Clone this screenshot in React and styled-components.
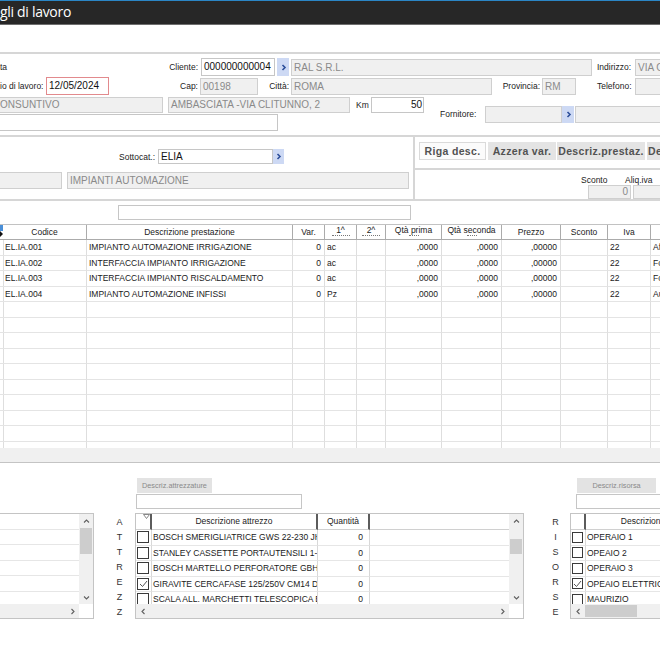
import React from 'react';
import styled, { createGlobalStyle } from 'styled-components';

const GlobalStyle = createGlobalStyle`
  html, body { margin: 0; padding: 0; background: #fff; }
  body { font-family: "Liberation Sans", Arial, sans-serif; color: #1e1e1e; }
  * { box-sizing: border-box; }
`;

const Window = styled.div`
  width: 660px;
  height: 660px;
  overflow: hidden;
  background: #fff;
  display: flex;
  flex-direction: column;
`;

const TitleBar = styled.div`
  flex: 0 0 25px;
  background: #272727;
  border-top: 1px solid #2b86c5;
  border-bottom: 1px solid #6e6e6e;
  color: #fff;
  font-family: "Open Sans", "Noto Sans", sans-serif;
  font-size: 14px;
  line-height: 21px;
  letter-spacing: -0.3px;
  white-space: nowrap;
`;

const Gap = styled.div`
  flex: 0 0 ${p => p.$h}px;
`;

const Section = styled.div`
  flex: 0 0 auto;
  border-top: 2px solid #d6d6d6;
  padding-top: ${p => p.$pt || 0}px;
  padding-bottom: ${p => p.$pb || 0}px;
`;

const Row = styled.div`
  display: flex;
  align-items: center;
  flex-shrink: 0;
  height: ${p => p.$h}px;
  margin-top: ${p => p.$mt || 0}px;
`;

const Block = styled.div`
  display: flex;
  align-items: center;
  margin-top: ${p => p.$mt || 0}px;
`;

const Stack = styled.div`
  flex: 0 0 ${p => p.$w}px;
  display: flex;
  flex-direction: column;
`;

const Label = styled.div`
  flex: 0 0 ${p => p.$w}px;
  margin-left: ${p => p.$ml || 0}px;
  font-size: 8.5px;
  color: #222;
  text-align: ${p => (p.$right ? 'right' : 'left')};
  white-space: nowrap;
`;

const Box = styled.div`
  flex: 0 0 ${p => p.$w}px;
  height: ${p => p.$h || 17}px;
  margin-left: ${p => p.$ml || 0}px;
  border: 1px solid ${p => (p.$v === 'err' ? '#e28a8d' : p.$v === 'off' ? '#cfcfcf' : '#c6c6c6')};
  ${p => p.$noLeft && 'border-left: none;'}
  background: ${p => (p.$v === 'off' ? '#f0f0f0' : '#fff')};
  color: ${p => (p.$v === 'off' ? '#8a8a8a' : '#111')};
  font-size: 10px;
  line-height: ${p => (p.$h || 17) - 2}px;
  padding: 0 ${p => (p.$pad === undefined ? 2 : p.$pad)}px;
  text-align: ${p => (p.$right ? 'right' : 'left')};
  white-space: nowrap;
  overflow: hidden;
`;

const ArrowBtn = styled.div`
  flex: 0 0 ${p => p.$w || 12}px;
  height: ${p => p.$h || 17}px;
  margin-left: ${p => p.$ml || 0}px;
  background: #cdd9f4;
  display: flex;
  align-items: center;
  justify-content: center;
`;

const Chevron = ({ dir = 'right', color = '#606060', w = 1.1 }) => {
  const d = {
    right: 'M2.5 1 L5 3.5 L2.5 6',
    left: 'M4.5 1 L2 3.5 L4.5 6',
    up: 'M1 4.5 L3.5 2 L6 4.5',
    down: 'M1 2.5 L3.5 5 L6 2.5',
  }[dir];
  return (
    <svg width="7" height="7" viewBox="0 0 7 7">
      <path d={d} fill="none" stroke={color} strokeWidth={w} />
    </svg>
  );
};

const Arrow = props => (
  <ArrowBtn {...props}>
    <Chevron dir="right" color="#2d4f9a" w={1.6} />
  </ArrowBtn>
);

/* section 2 */
const Split = styled.div`
  flex: 0 0 62px;
  border-top: 2px solid #d6d6d6;
  display: flex;
`;

const LeftPane = styled.div`
  flex: 0 0 413px;
  display: flex;
  flex-direction: column;
`;

const RightPane = styled.div`
  flex: 1;
  border-left: 2px solid #d6d6d6;
  display: flex;
  flex-direction: column;
  overflow: hidden;
`;

const BtnBar = styled.div`
  flex: 0 0 33px;
  border-bottom: 2px solid #d6d6d6;
  display: flex;
  align-items: flex-start;
  padding: 5px 0 0 4px;
  white-space: nowrap;
`;

const ActBtn = styled.div`
  flex: 0 0 ${p => p.$w}px;
  height: 18px;
  margin-left: ${p => p.$ml || 0}px;
  background: ${p => (p.$light ? '#fbfbfb' : '#e4e4e4')};
  border: 1px solid ${p => (p.$light ? '#dadada' : '#e4e4e4')};
  color: #525252;
  font-weight: bold;
  font-size: 10.5px;
  letter-spacing: 0.35px;
  line-height: 16px;
  text-align: center;
  white-space: nowrap;
  overflow: hidden;
`;

/* main grid */
const mainCols = [3, 84, 206, 32, 32, 29, 56, 60, 59, 47, 43, 60];

const Table = styled.div`
  flex: 0 0 224px;
  margin-top: 4px;
  border-top: 1px solid #c2c2c2;
  display: grid;
  grid-template-columns: ${mainCols.map(c => c + 'px').join(' ')};
  grid-template-rows: 15px;
  grid-auto-rows: 15.5px;
  align-content: start;
  overflow: hidden;
`;

const HeadCell = styled.div`
  border-right: 1px solid #ababab;
  border-bottom: 1px solid #ababab;
  font-size: 8.5px;
  color: #222;
  text-align: center;
  line-height: 14px;
  white-space: nowrap;
  overflow: hidden;
`;

const HeadTwo = styled.div`
  line-height: 8px;
  padding-top: 1px;
  display: flex;
  flex-direction: column;
  align-items: center;
`;

const UnitDots = styled.span`
  width: ${p => p.$w}px;
  margin-top: 1px;
  border-top: 1px dotted #777;
`;

const Corner = styled(HeadCell)`
  border-right: none;
  display: flex;
  flex-direction: column;
`;

const CornerBlue = styled.div`
  height: 6px;
  background: #4a8fd8;
`;

const CornerMark = styled.div`
  width: 0;
  height: 0;
  border-top: 3px solid transparent;
  border-bottom: 3px solid transparent;
  border-left: 3px solid #111;
`;

const Cell = styled.div`
  border-right: 1px solid #dedede;
  border-bottom: 1px solid #e4e4e4;
  font-size: 8.5px;
  color: #1a1a1a;
  line-height: 14.5px;
  padding: 0 ${p => (p.$right ? 3 : 1)}px 0 ${p => (p.$right ? 0 : 2)}px;
  text-align: ${p => (p.$right ? 'right' : 'left')};
  white-space: nowrap;
  overflow: hidden;
`;

const Band = styled.div`
  flex: 0 0 15px;
  background: #f0f0f0;
  border-bottom: 1px solid #c4c4c4;
`;

/* bottom part */
const Bottom = styled.div`
  flex: 1;
  display: flex;
  align-items: flex-start;
  padding-top: 15px;
`;

const Panel = styled.div`
  flex: 0 0 ${p => p.$w}px;
  margin-left: ${p => p.$ml || 0}px;
  margin-top: ${p => p.$mt || 0}px;
  display: flex;
  flex-direction: column;
  align-items: flex-start;
`;

const SmallBtn = styled.div`
  width: ${p => p.$w}px;
  height: 15px;
  margin-left: ${p => p.$ml || 0}px;
  background: #e3e3e3;
  color: #8a8a8a;
  font-size: 7.3px;
  line-height: 15px;
  text-align: center;
  white-space: nowrap;
`;

const SmallInput = styled.div`
  width: ${p => p.$w}px;
  height: 15px;
  margin-top: 1px;
  margin-left: ${p => p.$ml || 0}px;
  border: 1px solid #c6c6c6;
  background: #fff;
`;

const Letters = styled.div`
  flex: 0 0 9px;
  margin-left: ${p => p.$ml}px;
  margin-top: 37px;
  display: flex;
  flex-direction: column;
  align-items: center;
  font-size: 9px;
  line-height: 15px;
  color: #333;
`;

const Frame = styled.div`
  width: ${p => p.$w}px;
  height: 106px;
  margin-top: ${p => p.$mt || 0}px;
  border: 1px solid #c4c4c4;
  ${p => p.$noLeft && 'border-left: none;'}
  display: grid;
  grid-template-columns: 1fr 14px;
  grid-template-rows: 1fr 14px;
  background: #fff;
  overflow: hidden;
`;

const ListRows = styled.div`
  display: flex;
  flex-direction: column;
  overflow: hidden;
`;

const ListRow = styled.div`
  flex: 0 0 15.5px;
  border-bottom: 1px solid #e6e6e6;
`;

const ScrollV = styled.div`
  background: #f0f0f0;
  display: flex;
  flex-direction: column;
`;

const ScrollH = styled.div`
  background: #f0f0f0;
  display: flex;
  align-items: stretch;
`;

const ScrollBtn = styled.div`
  flex: 0 0 14px;
  display: flex;
  align-items: center;
  justify-content: center;
`;

const ThumbV = styled.div`
  flex: 0 0 ${p => p.$len}px;
  margin: ${p => p.$at}px 1px 0;
  background: #cdcdcd;
`;

const ThumbH = styled.div`
  flex: 0 0 ${p => p.$len}px;
  margin: 1px 0 1px ${p => p.$at}px;
  background: #cdcdcd;
`;

const Fill = styled.div`
  flex: 1;
`;

const Blank = styled.div`
  background: #fff;
`;

const SubGrid = styled.div`
  display: grid;
  grid-template-columns: ${p => p.$cols};
  grid-template-rows: 16px;
  grid-auto-rows: 15.5px;
  align-content: start;
  overflow: hidden;
`;

const SubHead = styled.div`
  border-right: ${p => (p.$bar ? '2px solid #5c5c5c' : 'none')};
  border-bottom: 1px solid #d0d0d0;
  font-size: 8.5px;
  color: #222;
  line-height: 15px;
  text-align: center;
  white-space: nowrap;
  overflow: hidden;
  display: flex;
  justify-content: ${p => (p.$filter ? 'flex-end' : 'center')};
  align-items: flex-start;
`;

const SubCell = styled.div`
  border-right: ${p => (p.$line ? '1px solid #d8d8d8' : 'none')};
  border-bottom: 1px solid #e6e6e6;
  font-size: 8.5px;
  color: #1a1a1a;
  line-height: 14.5px;
  padding: 0 ${p => (p.$right ? 6 : 1)}px 0 ${p => (p.$right ? 0 : 1)}px;
  text-align: ${p => (p.$right ? 'right' : 'left')};
  white-space: nowrap;
  overflow: hidden;
  display: ${p => (p.$center ? 'flex' : 'block')};
  align-items: center;
`;

const CheckBox = styled.span`
  width: ${p => p.$s}px;
  height: ${p => p.$s}px;
  border: 1px solid #3a3a3a;
  background: #fff;
  display: flex;
  align-items: center;
  justify-content: center;
`;

const Check = ({ on, s = 12 }) => (
  <CheckBox $s={s}>
    {on && (
      <svg width="9" height="8" viewBox="0 0 9 8">
        <path d="M1 4 L3.5 6.5 L8 1" fill="none" stroke="#555" strokeWidth="1" />
      </svg>
    )}
  </CheckBox>
);

const Filter = () => (
  <svg width="7" height="5" viewBox="0 0 7 5">
    <path d="M0.5 0.5 L6.5 0.5 L3.5 4.5 Z" fill="#fff" stroke="#6a6a6a" strokeWidth="0.8" />
  </svg>
);

const rows = [
  ['EL.IA.001', 'IMPIANTO AUTOMAZIONE IRRIGAZIONE', 'ac', 'Affidamento'],
  ['EL.IA.002', 'INTERFACCIA IMPIANTO IRRIGAZIONE', 'ac', 'Fornitura'],
  ['EL.IA.003', 'INTERFACCIA IMPIANTO RISCALDAMENTO', 'ac', 'Fornitura'],
  ['EL.IA.004', 'IMPIANTO AUTOMAZIONE INFISSI', 'Pz', 'Automazione'],
];

const attrezzi = [
  ['BOSCH SMERIGLIATRICE GWS 22-230 JH', false],
  ['STANLEY CASSETTE PORTAUTENSILI 1-93-981', false],
  ['BOSCH MARTELLO PERFORATORE GBH 2-26', false],
  ['GIRAVITE CERCAFASE 125/250V CM14 DIN', true],
  ['SCALA ALL. MARCHETTI TELESCOPICA EUROPA', false],
];

const risorse = [
  ['OPERAIO 1', false],
  ['OPEAIO 2', false],
  ['OPERAIO 3', false],
  ['OPEAIO ELETTRICO', true],
  ['MAURIZIO', false],
];

const MainGrid = () => {
  const body = [];
  for (let i = 0; i < 14; i++) {
    const r = rows[i];
    const vals = r
      ? [r[0], r[1], '0', r[2], '', ',0000', ',0000', ',00000', '', '22', r[3]]
      : ['', '', '', '', '', '', '', '', '', '', ''];
    const right = [false, false, true, false, false, true, true, true, true, false, false];
    body.push(<Cell key={'i' + i} />);
    vals.forEach((v, j) => (
      body.push(<Cell key={i + '-' + j} $right={right[j]}>{v}</Cell>)
    ));
  }
  const two = (a, w) => (
    <HeadTwo>
      {a}
      <UnitDots $w={w} />
    </HeadTwo>
  );
  return (
    <Table>
      <Corner>
        <CornerBlue />
        <CornerMark />
      </Corner>
      <HeadCell>Codice</HeadCell>
      <HeadCell>Descrizione prestazione</HeadCell>
      <HeadCell>Var.</HeadCell>
      <HeadCell>{two('1^', 18)}</HeadCell>
      <HeadCell>{two('2^', 18)}</HeadCell>
      <HeadCell>{two('Qtà prima', 10)}</HeadCell>
      <HeadCell>{two('Qtà seconda', 10)}</HeadCell>
      <HeadCell>Prezzo</HeadCell>
      <HeadCell>Sconto</HeadCell>
      <HeadCell>Iva</HeadCell>
      <HeadCell />
      {body}
    </Table>
  );
};

const VBar = ({ at, len }) => (
  <ScrollV>
    <ScrollBtn><Chevron dir="up" /></ScrollBtn>
    <ThumbV $at={at} $len={len} />
    <Fill />
    <ScrollBtn><Chevron dir="down" /></ScrollBtn>
  </ScrollV>
);

const App = () => (
  <Window>
    <GlobalStyle />
    <TitleBar>gli di lavoro</TitleBar>
    <Gap $h={27} />

    <Section $pt={4} $pb={4}>
      <Row $h={18}>
        <Label $w={166}>ta</Label>
        <Label $w={32} $right>Cliente:</Label>
        <Box $w={74} $h={18} $ml={3}>000000000004</Box>
        <Arrow $ml={2} $h={18} />
        <Box $w={301} $h={17} $ml={2} $v="off">RAL S.R.L.</Box>
        <Label $w={35} $ml={5}>Indirizzo:</Label>
        <Box $w={90} $ml={3} $v="off">VIA CLITUNNO, 2</Box>
      </Row>
      <Row $h={18} $mt={1}>
        <Label $w={46}>io di lavoro:</Label>
        <Box $w={63} $h={18} $v="err">12/05/2024</Box>
        <Label $w={89} $right>Cap:</Label>
        <Box $w={58} $ml={2} $v="off">00198</Box>
        <Label $w={31} $right>Città:</Label>
        <Box $w={201} $ml={2} $v="off">ROMA</Box>
        <Label $w={48} $right>Provincia:</Label>
        <Box $w={34} $ml={2} $v="off">RM</Box>
        <Label $w={35} $ml={21}>Telefono:</Label>
        <Box $w={90} $ml={3} $v="off" />
      </Row>
      <Block $mt={2}>
        <Stack $w={424}>
          <Row $h={16}>
            <Box $w={163} $h={16} $v="off" $noLeft $pad={0}>ONSUNTIVO</Box>
            <Box $w={182} $h={16} $ml={5} $v="off">AMBASCIATA -VIA CLITUNNO, 2</Box>
            <Label $w={15} $ml={6}>Km</Label>
            <Box $w={53} $h={16} $right $pad={1}>50</Box>
          </Row>
          <Row $h={17} $mt={1}>
            <Box $w={278} $h={17} $noLeft />
          </Row>
        </Stack>
        <Label $w={45} $ml={16}>Fornitore:</Label>
        <Box $w={77} $v="off" />
        <Arrow />
        <Box $w={100} $ml={1} $v="off" />
      </Block>
    </Section>

    <Split>
      <LeftPane>
        <Row $h={15} $mt={12}>
          <Label $w={155} $right>Sottocat.:</Label>
          <Box $w={115} $h={15} $ml={3}>ELIA</Box>
          <Arrow $w={11} $h={15} />
        </Row>
        <Row $h={17} $mt={8}>
          <Box $w={62} $v="off" $noLeft />
          <Box $w={342} $ml={5} $v="off">IMPIANTI AUTOMAZIONE</Box>
        </Row>
      </LeftPane>
      <RightPane>
        <BtnBar>
          <ActBtn $w={67} $light>Riga desc.</ActBtn>
          <ActBtn $w={68} $ml={2}>Azzera var.</ActBtn>
          <ActBtn $w={88} $ml={1}>Descriz.prestaz.</ActBtn>
          <ActBtn $w={80} $ml={2}>Descriz.gruppo</ActBtn>
        </BtnBar>
        <Row $h={10} $mt={5}>
          <Label $w={28} $ml={166}>Sconto</Label>
          <Label $w={40} $ml={16}>Aliq.iva</Label>
        </Row>
        <Row $h={14}>
          <Box $w={43} $h={14} $ml={173} $v="off" $right>0</Box>
          <Box $w={60} $h={14} $ml={2} $v="off" />
        </Row>
      </RightPane>
    </Split>

    <Section>
      <Row $h={15} $mt={4}>
        <Box $w={293} $h={15} $ml={118} />
      </Row>
    </Section>

    <MainGrid />
    <Band />

    <Bottom>
      <Panel $w={94} $mt={35}>
        <Frame $w={94} $noLeft>
          <ListRows>
            {[0, 1, 2, 3, 4, 5].map(i => <ListRow key={i} />)}
          </ListRows>
          <VBar at={0} len={26} />
          <ScrollH>
            <Fill />
            <ScrollBtn><Chevron dir="right" /></ScrollBtn>
          </ScrollH>
          <Blank />
        </Frame>
      </Panel>

      <Letters $ml={21}>
        {'ATTREZZ'.split('').map((c, i) => <span key={i}>{c}</span>)}
      </Letters>

      <Panel $w={389} $ml={11}>
        <SmallBtn $w={75} $ml={2}>Descriz.attrezzature</SmallBtn>
        <SmallInput $w={166} $ml={1} />
        <Frame $w={389} $mt={4}>
          <SubGrid $cols="16px 166px 52px 1fr">
            <SubHead $bar $filter><Filter /></SubHead>
            <SubHead $bar>Descrizione attrezzo</SubHead>
            <SubHead $bar>Quantità</SubHead>
            <SubHead />
            {attrezzi.map(([name, on], i) => (
              <React.Fragment key={i}>
                <SubCell $line $center><Check on={on} /></SubCell>
                <SubCell $line>{name}</SubCell>
                <SubCell $line $right>0</SubCell>
                <SubCell />
              </React.Fragment>
            ))}
          </SubGrid>
          <VBar at={11} len={15} />
          <ScrollH>
            <ScrollBtn><Chevron dir="left" /></ScrollBtn>
            <Fill />
            <ScrollBtn><Chevron dir="right" /></ScrollBtn>
          </ScrollH>
          <Blank />
        </Frame>
      </Panel>

      <Letters $ml={27}>
        {'RISORSE'.split('').map((c, i) => <span key={i}>{c}</span>)}
      </Letters>

      <Panel $w={140} $ml={10}>
        <SmallBtn $w={79} $ml={7}>Descriz.risorsa</SmallBtn>
        <SmallInput $w={100} $ml={6} />
        <Frame $w={140} $mt={4}>
          <SubGrid $cols="15px 114px 1fr">
            <SubHead $bar />
            <SubHead>Descrizione</SubHead>
            <SubHead />
            {risorse.map(([name, on], i) => (
              <React.Fragment key={i}>
                <SubCell $line $center><Check on={on} s={11} /></SubCell>
                <SubCell>{name}</SubCell>
                <SubCell />
              </React.Fragment>
            ))}
          </SubGrid>
          <VBar at={11} len={15} />
          <ScrollH>
            <ScrollBtn><Chevron dir="left" /></ScrollBtn>
            <ThumbH $at={0} $len={52} />
            <Fill />
          </ScrollH>
          <Blank />
        </Frame>
      </Panel>
    </Bottom>
  </Window>
);

export default App;
